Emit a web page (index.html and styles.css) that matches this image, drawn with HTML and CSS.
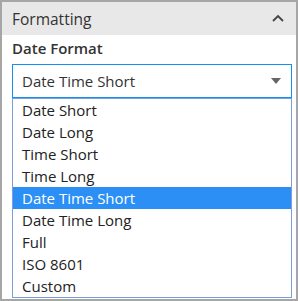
FILE: index.html
```html
<html>

<head>
    <title>Formatting</title>
    <link rel="stylesheet" href="styles.css">
</head>

<body>
    <div class="panel">
        <div class="panelHeader">
            <span>Formatting</span>
            <svg class="chevron" width="12" height="8" viewBox="0 0 12 8">
                <path d="M1 7 L6 2 L11 7" fill="none" stroke="#444" stroke-width="1.8" />
            </svg>
        </div>
        <div class="panelBody">
            <div class="fieldLabel">Date Format</div>
            <div class="selectBox">
                <span>Date Time Short</span>
                <svg class="caret" width="10" height="6" viewBox="0 0 10 6">
                    <path d="M0 0 L10 0 L5 6 Z" fill="#666" />
                </svg>
            </div>
            <ul class="optionList">
                <li>Date Short</li>
                <li>Date Long</li>
                <li>Time Short</li>
                <li>Time Long</li>
                <li class="selected">Date Time Short</li>
                <li>Date Time Long</li>
                <li>Full</li>
                <li>ISO 8601</li>
                <li>Custom</li>
            </ul>
        </div>
    </div>
</body>

</html>
```
FILE: styles.css
```css
body {
    margin: 0;
    font-family: "Open Sans", "Noto Sans", sans-serif;
    color: #333;
}

.panel {
    width: 298px;
    height: 301px;
    box-sizing: border-box;
    border: 2px solid #a6a6a6;
    background: #fff;
}

.panelHeader {
    height: 33px;
    background: #e8e8e8;
    display: flex;
    align-items: center;
    justify-content: space-between;
    padding: 0 12px 0 10px;
    font-size: 15.5px;
    color: #333;
}

.chevron {
    margin-top: -2px;
}

.panelBody {
    padding: 2px 4px 0 10px;
}

.fieldLabel {
    font-size: 15px;
    font-weight: 600;
    height: 27px;
    line-height: 22px;
}

.selectBox {
    height: 32px;
    border: 1px solid #1590f0;
    display: flex;
    align-items: center;
    justify-content: space-between;
    padding: 0 10px 0 9px;
    font-size: 15px;
}

.optionList {
    list-style: none;
    margin: 0;
    padding: 0;
    border: 1px solid #7b9fd6;
    border-top-color: #7b9fd6;
    font-size: 15px;
}

.optionList li {
    height: 22px;
    line-height: 22px;
    padding-left: 9px;
    color: #222;
}

.optionList li.selected {
    background: #2b8ff6;
    color: #fff;
}
```
